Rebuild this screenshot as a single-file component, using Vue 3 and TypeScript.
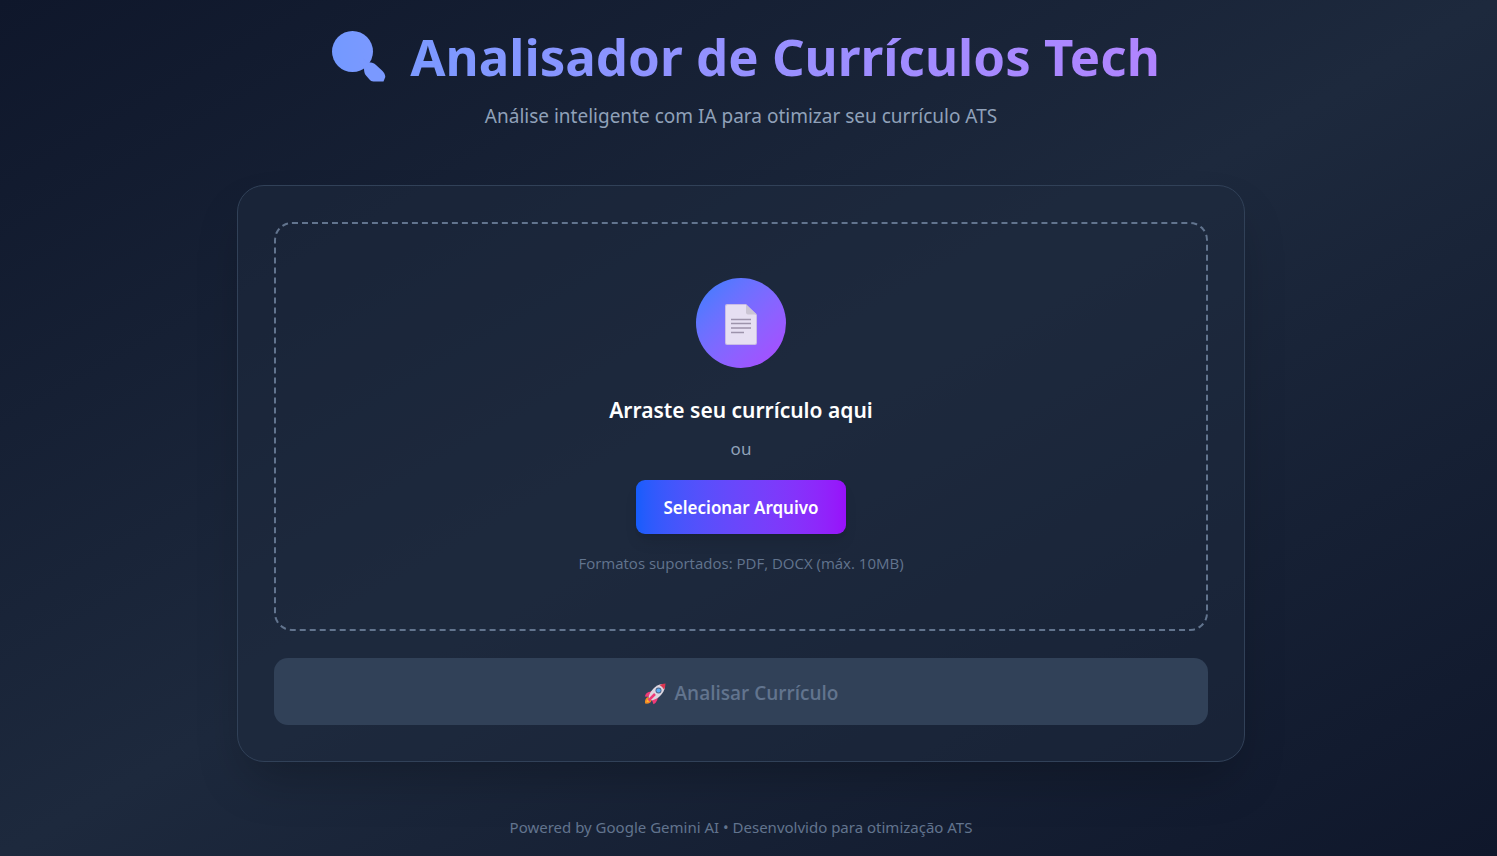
<script setup lang="ts">
import { ref } from 'vue'

const picker = ref<HTMLInputElement | null>(null)
const file = ref<File | null>(null)

function openPicker() {
  picker.value?.click()
}

function onChange(event: Event) {
  file.value = (event.target as HTMLInputElement).files?.[0] ?? null
}

function onDrop(event: DragEvent) {
  file.value = event.dataTransfer?.files?.[0] ?? null
}
</script>

<template>
  <div class="page">
    <header class="header">
      <h1 class="title">
        <svg class="magnifier" viewBox="0 -2 54 54" aria-hidden="true">
          <defs>
            <linearGradient id="lens" x1="0" x2="1" y1="0" y2="0">
              <stop offset="0" stop-color="#7399ff" />
              <stop offset="1" stop-color="#7b99ff" />
            </linearGradient>
          </defs>
          <circle cx="20.5" cy="20.5" r="20.5" fill="url(#lens)" />
          <path d="M32 36.500C32 33.500 34.500 31.500 37 31.500C40 31.500 42 32 44 34L50 39.500C52 41.500 53.300 43.500 53.300 46L51.500 50.500H41.500C39.500 50.500 38.500 49.500 37.500 48.500L34 44.500C32.300 42.500 32 40 32 36.500Z" fill="#7a99ff" />
          <path d="M29 29L37 37" stroke="#7a99ff" stroke-width="5" />
        </svg>
        <span class="title-text">Analisador de Currículos Tech</span>
      </h1>
      <p class="subtitle">Análise inteligente com IA para otimizar seu currículo ATS</p>
    </header>

    <main class="card">
      <section class="dropzone" @dragover.prevent @drop.prevent="onDrop">
        <div class="badge">
          <svg class="doc" viewBox="0 0 32 41" aria-hidden="true">
            <path d="M2 0H21L32 11V39Q32 41 30 41H2Q0 41 0 39V2Q0 0 2 0Z" fill="#c9bce6" />
            <path d="M2.500 1H21L31 11V38.500Q31 40 29.500 40H2.500Q1 40 1 38.500V2.500Q1 1 2.500 1Z" fill="#e6dff2" />
            <path d="M21 0.500L32 10.500H23Q21 10.500 21 8.500Z" fill="#cbc5d4" />
            <path d="M6 15.500H26M6 19.500H26M6 24H26M6 28.500H19" stroke="#9d93ab" stroke-width="1.500" />
          </svg>
        </div>
        <h2 class="prompt">Arraste seu currículo aqui</h2>
        <p class="or">ou</p>
        <button class="select" type="button" @click="openPicker">Selecionar Arquivo</button>
        <input ref="picker" type="file" accept=".pdf,.docx" aria-label="Selecionar Arquivo" hidden @change="onChange" />
        <p class="formats">Formatos suportados: PDF, DOCX (máx. 10MB)</p>
      </section>

      <button class="analyze" type="button" :disabled="!file">
        <svg class="rocket" viewBox="0 0 22 22" aria-hidden="true">
          <path d="M1 20.500C0.500 17 2 14.500 4 14L7.500 17.500C7 20 4.500 21 1 20.500Z" fill="#f08a24" />
          <path d="M2.500 19C2.500 17 3.500 16 5 16L6 17C5.500 18.500 4.500 19.200 2.500 19Z" fill="#ffb52e" />
          <path d="M8.500 8L4 9.200Q1.500 10 0.800 13.500L6 14Z" fill="#ee3a78" />
          <path d="M14.500 13L13 17.500Q12 20 9.500 21.200L7.500 16Z" fill="#ee3a78" />
          <path d="M4.500 14.500C6 8 11 2 18.500 1L21 1L21 3.500C20 11 14 16 7.500 17.500Z" fill="#dcd6e0" />
          <path d="M15.500 2Q18 0.500 21.500 0.500Q21.500 4 20 6.500Q18.500 3.500 15.500 2Z" fill="#dc3550" />
          <path d="M4.500 17.500L11 11" stroke="#ee3a78" stroke-width="2.500" />
          <circle cx="14.500" cy="7.500" r="3" fill="#4d6388" />
          <circle cx="14.500" cy="7.500" r="2.100" fill="#5aa9ee" />
        </svg>
        <span>Analisar Currículo</span>
      </button>
    </main>

    <footer class="footer">Powered by Google Gemini AI • Desenvolvido para otimização ATS</footer>
  </div>
</template>

<style>
body {
  margin: 0;
}
</style>

<style scoped>
.page {
  box-sizing: border-box;
  min-height: 100vh;
  padding: 18px 33px 16px 18px;
  display: flex;
  flex-direction: column;
  align-items: center;
  background: linear-gradient(to bottom right in oklab, #0f172b, #1d293d, #0f172b);
  font-family: "Segoe UI", "Noto Sans", "Open Sans", sans-serif;
  color: #fff;
}

h1,
h2,
p {
  margin: 0;
}

.header {
  width: 100%;
  display: flex;
  flex-direction: column;
  gap: 12px;
  text-align: center;
}

.title {
  padding-left: 10px;
  display: flex;
  align-items: center;
  justify-content: center;
  gap: 24px;
  background: linear-gradient(to right in oklab, #51a2ff, #c27aff);
  background-clip: text;
  -webkit-background-clip: text;
  color: transparent;
  font-size: 51px;
  line-height: 76px;
  font-weight: 700;
}

.magnifier {
  width: 54px;
  height: 54px;
}

.subtitle {
  color: #90a1b9;
  font-size: 19px;
  line-height: 20px;
}

.card {
  box-sizing: border-box;
  width: 100%;
  max-width: 1008px;
  margin-top: 59px;
  padding: 36px;
  display: flex;
  flex-direction: column;
  gap: 27px;
  border: 1px solid #314158;
  border-radius: 27px;
  background: rgba(29, 41, 61, 0.5);
  box-shadow: 0 25px 50px -12px rgba(0, 0, 0, 0.25);
}

.dropzone {
  padding: 54px;
  display: flex;
  flex-direction: column;
  align-items: center;
  border: 2px dashed #62748e;
  border-radius: 18px;
}

.badge {
  box-sizing: border-box;
  width: 90px;
  height: 90px;
  padding-top: 2px;
  display: flex;
  align-items: center;
  justify-content: center;
  border-radius: 50%;
  background: linear-gradient(to bottom right in oklab, #2b7fff, #ad46ff);
}

.doc {
  width: 32px;
  height: 41px;
}

.prompt {
  margin-top: 27px;
  font-size: 21px;
  line-height: 31px;
  font-weight: 600;
}

.or {
  margin-top: 10px;
  color: #90a1b9;
  font-size: 17px;
  line-height: 26px;
}

.select {
  margin-top: 18px;
  padding: 15px 27px 13px;
  border: 0;
  border-radius: 9px;
  background: linear-gradient(to right in oklab, #155dfc, #9810fa);
  box-shadow: 0 10px 15px -3px rgba(0, 0, 0, 0.1), 0 4px 6px -4px rgba(0, 0, 0, 0.1);
  color: #fff;
  font: inherit;
  font-size: 17px;
  line-height: 26px;
  font-weight: 600;
  cursor: pointer;
}

.formats {
  margin-top: 18px;
  color: #62748e;
  font-family: "Segoe UI", "Open Sans", sans-serif;
  font-size: 15px;
  line-height: 23px;
}

.analyze {
  width: 100%;
  padding: 20px 18px 16px;
  display: flex;
  align-items: center;
  justify-content: center;
  gap: 9px;
  border: 0;
  border-radius: 14px;
  background: #314158;
  color: #62748e;
  font-family: "Segoe UI", "Open Sans", sans-serif;
  font-size: 19px;
  line-height: 31px;
  font-weight: 600;
}

.rocket {
  width: 22px;
  height: 22px;
}

.footer {
  margin-top: 54px;
  color: #62748e;
  font-size: 15px;
  line-height: 23px;
  text-align: center;
}
</style>
